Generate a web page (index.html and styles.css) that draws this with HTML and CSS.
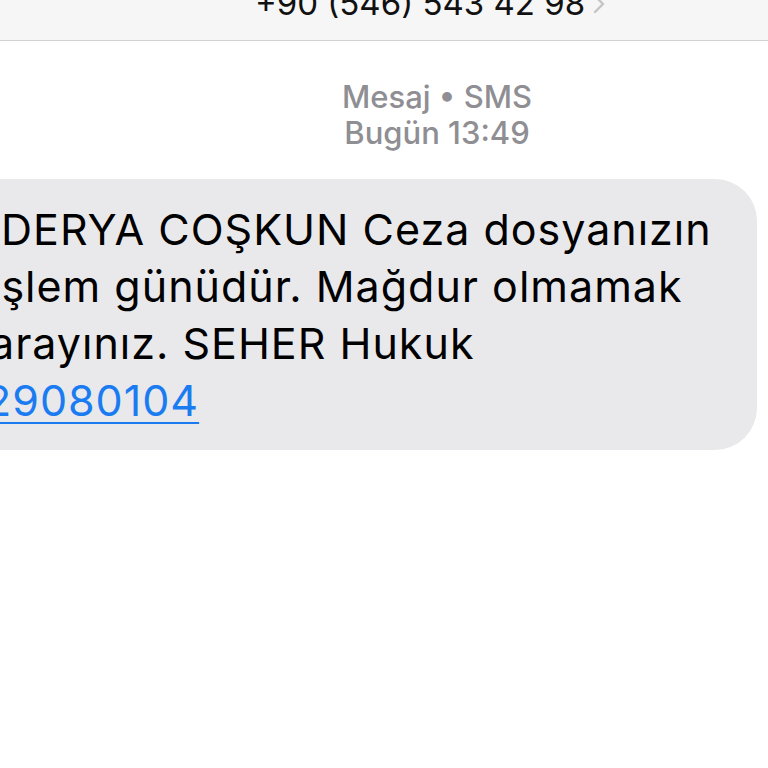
FILE: index.html
```html
<!DOCTYPE html>
<html lang="tr">
<head>
<meta charset="utf-8">
<link rel="stylesheet" href="styles.css">
</head>
<body>
<div class="screen">
  <header class="header">
    <div class="number">+90 (546) 543 42 98<svg class="chev" width="12" height="20" viewBox="0 0 12 20"><path d="M2 18 L10 10 L2 2" fill="none" stroke="#c4c4c7" stroke-width="2.4" stroke-linecap="round" stroke-linejoin="round"/></svg></div>
  </header>
  <div class="meta">
    <div>Mesaj • SMS</div>
    <div>Bugün 13:49</div>
  </div>
  <div class="thread">
    <div class="bubble">
      <div class="line l1">DERYA COŞKUN Ceza dosyanızın</div>
      <div class="line l2">işlem günüdür. Mağdur olmamak</div>
      <div class="line l3">arayınız. SEHER Hukuk</div>
      <div class="line l4"><a class="link" href="#">29080104</a></div>
    </div>
  </div>
</div>
</body>
</html>
```

FILE: styles.css
```css
* { box-sizing: border-box; }
html, body { margin: 0; padding: 0; background: #fff; }
body { font-family: Inter, "Noto Sans", sans-serif; color: #000; }
.screen { width: 768px; height: 768px; overflow: hidden; position: relative; background: #fff; }
.header {
  height: 41px;
  background: #f6f6f6;
  border-bottom: 1px solid #d2d2d4;
  display: flex;
  justify-content: center;
  padding-left: 92px;
}
.number {
  font-size: 33px;
  line-height: 33px;
  margin-top: -34px;
  color: #111;
  white-space: nowrap;
  display: flex;
  align-items: center;
  gap: 8px;
}
.chev { margin-top: 2px; }
.meta {
  margin-top: 38px;
  padding-left: 106px;
  text-align: center;
  color: #8e8e93;
  font-size: 31px;
  line-height: 36px;
  font-weight: 500;
}
.thread { margin-top: 28px; }
.bubble {
  margin-left: -60px;
  width: 817px;
  height: 271px;
  background: #e9e9eb;
  border-radius: 42px;
  padding: 22px 0 0 61px;
  overflow: hidden;
}
.line {
  font-size: 43px;
  line-height: 57px;
  white-space: nowrap;
  letter-spacing: 1px;
}
.l2 { margin-left: -11px; }
.l3 { margin-left: -11px; }
.l4 { margin-left: -16px; }
.link { color: #1b7cf2; text-decoration: underline; text-decoration-thickness: 2px; text-underline-offset: 6px; }
```
